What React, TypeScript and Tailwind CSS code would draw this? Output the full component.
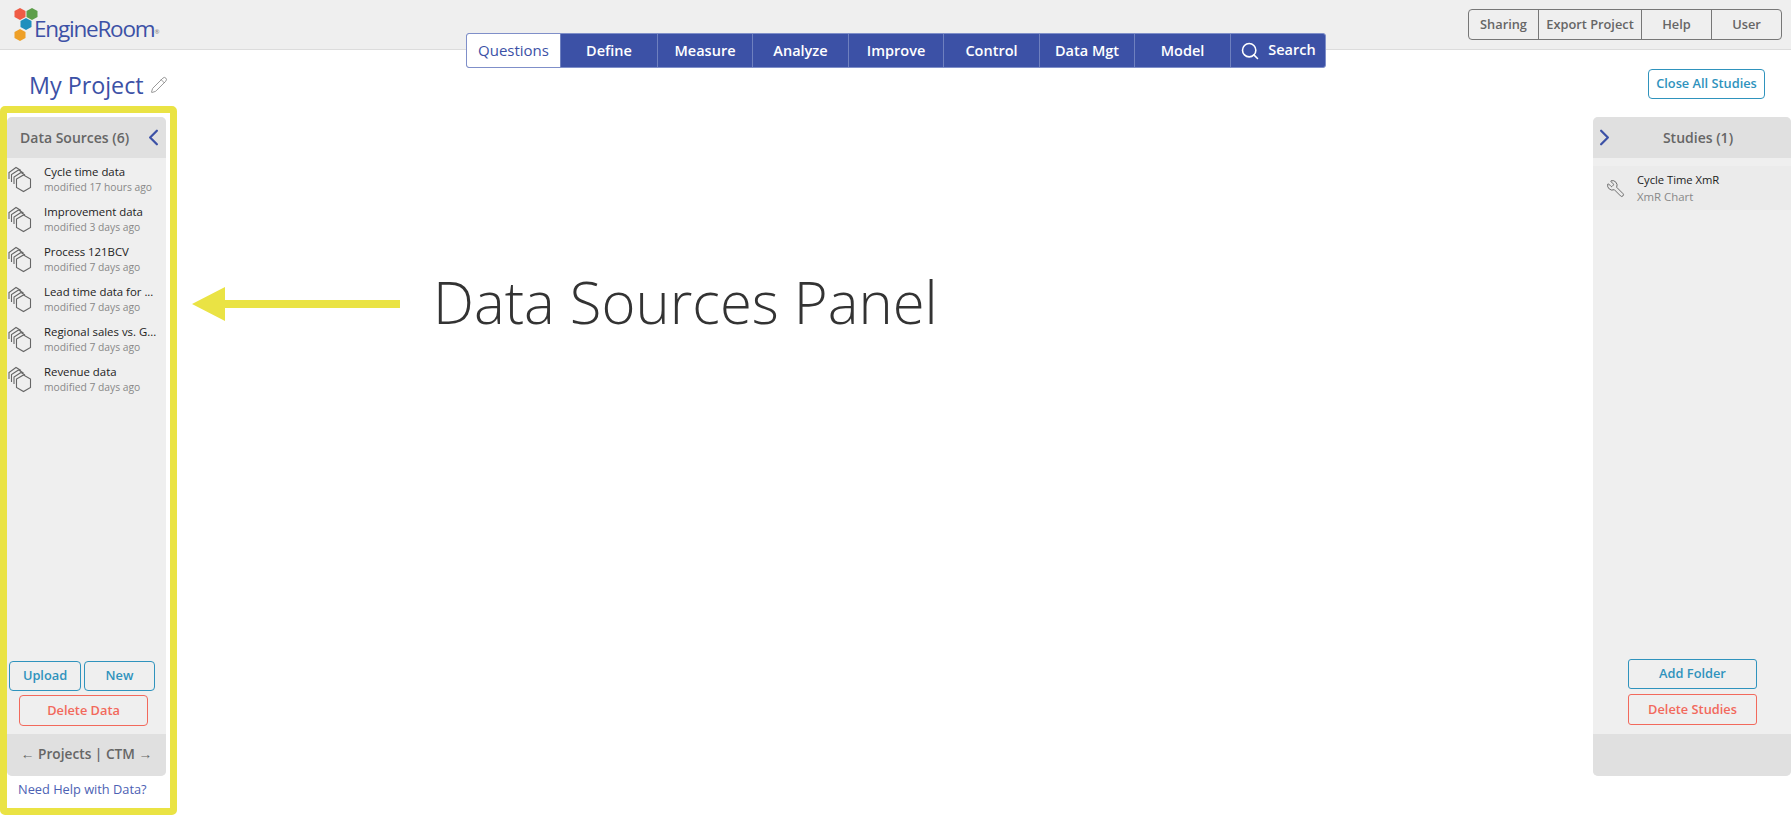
import { ChevronLeft, ChevronRight, Pencil, Search, Wrench } from "lucide-react";

const tabs = [
  { label: "Define", width: "w-[97px]" },
  { label: "Measure", width: "w-[95px]" },
  { label: "Analyze", width: "w-[96px]" },
  { label: "Improve", width: "w-[95px]" },
  { label: "Control", width: "w-[96px]" },
  { label: "Data Mgt", width: "w-[95px]" },
  { label: "Model", width: "w-[96px]" },
];

const headerLinks = [
  { label: "Sharing", width: "w-[69px]" },
  { label: "Export Project", width: "w-[103px]" },
  { label: "Help", width: "w-[70px]" },
  { label: "User", width: "w-[70px]" },
];

const dataSources = [
  { name: "Cycle time data", modified: "modified 17 hours ago" },
  { name: "Improvement data", modified: "modified 3 days ago" },
  { name: "Process 121BCV", modified: "modified 7 days ago" },
  { name: "Lead time data for ...", modified: "modified 7 days ago" },
  { name: "Regional sales vs. G...", modified: "modified 7 days ago" },
  { name: "Revenue data", modified: "modified 7 days ago" },
];

function Logo() {
  return (
    <div className="relative h-[42px] w-[165px]">
      <svg className="absolute left-[14px] top-[7px]" width="26" height="35" viewBox="0 0 26 35">
        <polygon points="6,1 11.5,4 11.5,10 6,13 0.5,10 0.5,4" fill="#ef5b45" />
        <polygon points="18,1 23.5,4 23.5,10 18,13 12.5,10 12.5,4" fill="#5d9e49" />
        <polygon points="12,11 17.5,14 17.5,20 12,23 6.5,20 6.5,14" fill="#1f8fbd" />
        <polygon points="6,22 11.5,25 11.5,31 6,34 0.5,31 0.5,25" fill="#eea028" />
      </svg>
      <span className="absolute left-[34px] top-[14px] text-[22.5px] font-medium leading-[30px] tracking-[-1.2px] text-[#3c51a6]">
        EngineRoom
        <sup className="text-[6px] tracking-normal text-[#777]">®</sup>
      </span>
    </div>
  );
}

function StackIcon() {
  return (
    <svg width="24" height="27" viewBox="0 0 24 27" fill="none" stroke="#666" strokeWidth="1.1" className="mt-[2px] shrink-0">
      <path d="M1 13 V6.5 L8 1.5 L13 4.5" />
      <path d="M3.5 16 V8.5 L10.5 4 L15.5 7" />
      <path d="M6 18 V11 L13 6.5 L17 9" />
      <polygon points="15.5,9 22.5,13 22.5,21.5 15.5,25.5 8.5,21.5 8.5,13" fill="#efefef" />
    </svg>
  );
}

function Navbar() {
  return (
    <nav className="absolute left-[466px] top-[33px] flex h-[35px] w-[860px] overflow-hidden rounded-[3px] border border-[#7f8fc9] bg-[#3c51a6] text-[14.5px] font-semibold text-white">
      <div className="flex w-[93px] items-center justify-center bg-white text-[15px] font-normal text-[#3c51a6]">Questions</div>
      {tabs.map((tab) => (
        <div key={tab.label} className={`flex items-center justify-center border-l border-[#6f80bf] ${tab.width}`}>
          {tab.label}
        </div>
      ))}
      <div className="flex flex-1 items-center justify-center gap-[8px] border-l border-[#6f80bf]">
        <Search size={20} strokeWidth={1.9} />
        <span className="-mt-[2px]">Search</span>
      </div>
    </nav>
  );
}

function DataSourcesPanel() {
  return (
    <div className="flex h-[709px] w-[177px] shrink-0 flex-col rounded-[5px] border-[7px] border-[#eae344] bg-white pt-[4px] pr-[4px]">
      <div className="flex h-[659px] flex-col overflow-hidden rounded-[5px] bg-[#efefef]">
        <div className="relative flex h-[41px] shrink-0 items-center bg-[#e0e0e0] pl-[13px] text-[14px] font-semibold text-[#666]">
          Data Sources (6)
          <ChevronLeft size={27} strokeWidth={2} className="absolute right-[-1px] top-[7px] text-[#3c51a6]" />
        </div>
        <ul className="flex-1 pt-[6px]">
          {dataSources.map((source) => (
            <li key={source.name} className="flex h-[40px] items-start gap-[12px] pl-[1px]">
              <StackIcon />
              <div className="whitespace-nowrap">
                <div className="text-[11.4px] leading-[15px] text-[#222]">{source.name}</div>
                <div className="text-[10.3px] leading-[17px] text-[#888]">{source.modified}</div>
              </div>
            </li>
          ))}
        </ul>
        <div className="flex flex-col gap-[4px] pb-[8px] pl-[2px]">
          <div className="flex gap-[3px]">
            <button className="h-[30px] w-[72px] rounded-[4px] border border-[#2f93bd] text-[12.8px] font-semibold text-[#2f93bd]">Upload</button>
            <button className="h-[30px] w-[71px] rounded-[4px] border border-[#2f93bd] text-[12.8px] font-semibold text-[#2f93bd]">New</button>
          </div>
          <button className="ml-[10px] h-[31px] w-[129px] rounded-[4px] border border-[#f2695c] text-[12.8px] font-semibold text-[#f2695c]">Delete Data</button>
        </div>
        <div className="flex h-[42px] shrink-0 items-center justify-center bg-[#e0e0e0] pb-[2px] text-[13.7px] font-semibold text-[#666]">
          ← Projects | CTM →
        </div>
      </div>
      <a className="pl-[11px] pt-[4px] text-[12.8px] leading-[18px] text-[#4c61b3]">Need Help with Data?</a>
    </div>
  );
}

function Annotation() {
  return (
    <div className="mt-[148px] flex h-[100px] flex-1 items-center pl-[15px]">
      <svg width="208" height="34" viewBox="0 0 208 34" className="shrink-0">
        <polygon points="0,17 33,0 33,13 208,13 208,21 33,21 33,34" fill="#eae344" />
      </svg>
      <span className="-mt-[4px] ml-[33px] text-[58px] font-[350] leading-none text-[#333]">Data Sources Panel</span>
    </div>
  );
}

function StudiesPanel() {
  return (
    <div className="mt-[11px] flex h-[659px] w-[198px] shrink-0 flex-col overflow-hidden rounded-[5px] bg-[#efefef]">
      <div className="relative flex h-[41px] shrink-0 items-center justify-center bg-[#e0e0e0] pl-[12px] text-[14px] font-semibold text-[#666]">
        <ChevronRight size={27} strokeWidth={2} className="absolute left-[-2px] top-[7px] text-[#3c51a6]" />
        Studies (1)
      </div>
      <div className="mt-[8px] flex h-[44px] items-center bg-[#ebebeb] pl-[13px]">
        <Wrench size={19} strokeWidth={1.2} className="-scale-x-100 text-[#666]" />
        <div className="ml-[12px]">
          <div className="text-[11.2px] leading-[17px] text-[#222]">Cycle Time XmR</div>
          <div className="text-[11.4px] leading-[17px] text-[#888]">XmR Chart</div>
        </div>
      </div>
      <div className="flex flex-1 flex-col items-center justify-end gap-[5px] pb-[9px] pl-[1px]">
        <button className="h-[30px] w-[129px] rounded-[3px] border border-[#2f93bd] text-[12.8px] font-semibold text-[#2f93bd]">Add Folder</button>
        <button className="h-[31px] w-[129px] rounded-[3px] border border-[#f2695c] text-[12.8px] font-semibold text-[#f2695c]">Delete Studies</button>
      </div>
      <div className="h-[42px] shrink-0 bg-[#e0e0e0]" />
    </div>
  );
}

export default function App() {
  return (
    <div className="relative h-[832px] w-[1791px] overflow-hidden bg-white font-['Open_Sans',sans-serif]">
      <header className="flex h-[50px] items-start justify-between border-b border-[#dcdcdc] bg-[#efefef] pr-[9px] pt-[9px]">
        <div className="-mt-[9px]">
          <Logo />
        </div>
        <div className="flex h-[31px] overflow-hidden rounded-[4px] border border-[#777] text-[12.8px] font-semibold text-[#666]">
          {headerLinks.map((link, i) => (
            <div
              key={link.label}
              className={`flex items-center justify-center ${link.width} ${i > 0 ? "border-l border-[#777]" : ""}`}
            >
              {link.label}
            </div>
          ))}
        </div>
      </header>
      <Navbar />
      <div className="flex h-[56px] items-start justify-between pl-[29px] pr-[26px] pt-[19px]">
        <div className="flex items-center gap-[6px] text-[#3c51a6]">
          <span className="text-[23.3px] leading-[32px]">My Project</span>
          <Pencil size={18} strokeWidth={1} className="text-[#777]" />
        </div>
        <button className="h-[30px] w-[117px] rounded-[4px] border border-[#2f93bd] text-[12.8px] font-semibold text-[#2f93bd]">
          Close All Studies
        </button>
      </div>
      <main className="flex items-start justify-between">
        <DataSourcesPanel />
        <Annotation />
        <StudiesPanel />
      </main>
    </div>
  );
}
